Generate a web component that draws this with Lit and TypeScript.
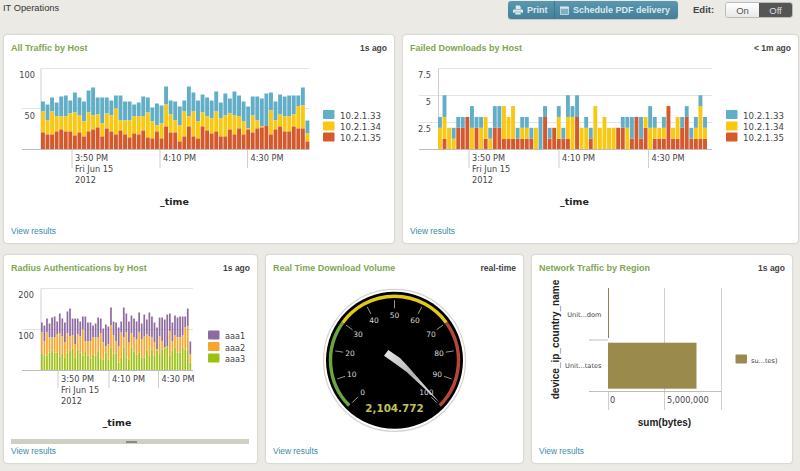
import { LitElement, html, css, svg } from "lit";
import { customElement } from "lit/decorators.js";

const TOTAL = [48,45,52,47,53,54,49,57,52,48,59,62,52,52,52,49,54,54,48,48,45,47,53,52,42,46,44,63,49,48,43,49,63,57,49,55,52,49,58,47,56,51,58,54,48,43,53,53,51,56,57,48,55,53,54,54,54,62,29];
const MID = [38,29,38,33,33,33,36,37,34,28,37,34,35,26,36,34,41,29,29,29,33,33,33,37,28,24,26,45,35,29,24,38,33,38,28,37,33,31,38,31,34,36,34,33,28,21,34,29,23,24,39,29,35,33,33,35,43,44,16];
const LOW = [17,15,15,18,20,18,18,14,17,13,18,20,22,13,21,18,15,19,15,12,16,15,19,12,11,18,11,23,17,17,8,13,23,13,11,23,19,16,18,13,13,20,15,21,15,20,17,21,22,24,15,20,23,18,18,23,21,21,8];
// failed downloads: [red, yellow, blue] counts per bar
const FAILED = [[0,2,1],[1,2,2],[0,2,0],[0,1,1],[2,0,1],[2,0,1],[3,0,0],[0,2,2],[2,0,1],[0,2,1],[1,2,0],[0,1,1],[2,0,2],[2,0,2],[1,3,0],[1,2,0],[1,3,0],[1,0,1],[1,1,1],[1,1,1],[1,0,1],[0,2,0],[0,0,3],[3,0,1],[1,0,1],[2,0,0],[1,2,1],[1,0,1],[1,2,2],[0,3,1],[3,0,2],[0,2,0],[0,2,1],[1,0,1],[0,4,0],[0,2,0],[0,3,0],[0,2,0],[0,2,0],[2,0,0],[2,0,1],[0,2,1],[1,0,2],[3,0,0],[1,0,2],[2,1,0],[0,2,2],[1,1,1],[1,1,0],[1,1,1],[4,0,0],[1,1,0],[1,2,0],[2,0,1],[3,0,1],[1,0,1],[1,1,1],[1,3,1],[1,1,1]].slice(0, 59);

const polar = (cx: number, cy: number, r: number, deg: number): [number, number] => {
  const a = ((deg - 90) * Math.PI) / 180;
  return [cx + r * Math.cos(a), cy + r * Math.sin(a)];
};
const arc = (cx: number, cy: number, r: number, a: number, b: number) => {
  const [x1, y1] = polar(cx, cy, r, a);
  const [x2, y2] = polar(cx, cy, r, b);
  return `M${x1} ${y1}A${r} ${r} 0 ${b - a > 180 ? 1 : 0} 1 ${x2} ${y2}`;
};

interface Axis {
  left: number; right: number; axisStart: number; base: number; top: number;
  grids: number[]; ylabels: [string, number][]; yRight: number;
  ticks: [number, string][]; tickEnd: number;
  timeX: number; timeY: number;
}
const axes = (a: Axis) => svg`
  ${a.grids.map((y) => svg`<line class="grid" x1=${a.axisStart} x2=${a.right} y1=${y} y2=${y}></line>`)}
  <line class="grid" x1=${a.left} x2=${a.right} y1=${a.top} y2=${a.top}></line>
  <line class="axis" x1=${a.left} x2=${a.left} y1=${a.top} y2=${a.base}></line>
  ${a.ylabels.map(([t, y]) => svg`<text class="lbl" x=${a.yRight} y=${y} text-anchor="end">${t}</text>`)}
  ${a.ticks.map(([x, t], i) => svg`
    <line class="axis" x1=${x} x2=${x} y1=${a.base} y2=${a.tickEnd}></line>
    <text class="lbl" x=${x + 3} y=${a.base + 11}>${t}</text>
    ${i === 0 ? svg`<text class="lbl" x=${x + 3} y=${a.base + 22}>Fri Jun 15</text><text class="lbl" x=${x + 3} y=${a.base + 33}>2012</text>` : ""}
  `)}
  <text class="axt" x=${a.timeX} y=${a.timeY} text-anchor="middle">_time</text>
`;
const legend = (x: number, y: number[], items: [string, string][], cls = "leg") => items.map(([t, c], i) => svg`
  <rect x=${x} y=${y[i]} width="11.5" height="9" rx="1" fill=${c}></rect>
  <text class=${cls} x=${x + 17} y=${y[i] + 8.6}>${t}</text>
`);
const baseLine = (x1: number, x2: number, y: number) => svg`<line class="base" x1=${x1} x2=${x2} y1=${y} y2=${y}></line>`;

const BLUE = "#62aec7", YEL = "#f8c813", RED = "#d5592d";
const HOSTS: [string, string][] = [["10.2.1.33", BLUE], ["10.2.1.34", YEL], ["10.2.1.35", RED]];

const stack = (x0: number, pitch: number, w: number, base: number, c: [string, string, string]) =>
  TOTAL.map((t, i) => {
    const x = x0 + i * pitch;
    return svg`
      <rect x=${x} y=${base - t} width=${w} height=${t - MID[i]} fill=${c[0]}></rect>
      <rect x=${x} y=${base - MID[i]} width=${w} height=${MID[i] - LOW[i]} fill=${c[1]}></rect>
      <rect x=${x} y=${base - LOW[i]} width=${w} height=${LOW[i]} fill=${c[2]}></rect>`;
  });

const failedBars = (x0: number, pitch: number, w: number, base: number, unit: number) =>
  FAILED.map(([r, y, b], i) => {
    const x = x0 + i * pitch;
    return svg`
      <rect x=${x} y=${base - r * unit} width=${w} height=${r * unit} fill=${RED}></rect>
      <rect x=${x} y=${base - (r + y) * unit} width=${w} height=${y * unit} fill=${YEL}></rect>
      <rect x=${x} y=${base - (r + y + b) * unit} width=${w} height=${b * unit} fill=${BLUE}></rect>`;
  });

@customElement("app-root")
export class AppRoot extends LitElement {
  static styles = css`
    :host { display: block; width: 800px; height: 471px; overflow: hidden; background: #ebeae5; font-family: "Liberation Sans", Arial, sans-serif; }
    .top { display: flex; align-items: flex-start; height: 35px; box-sizing: border-box; padding: 1px 7px 0 3px; color: #333; }
    .crumb { font-size: 9.3px; line-height: 15px; flex: 1; color: #333; }
    .btns { display: flex; height: 18px; border-radius: 3px; background: linear-gradient(#5c97b0, #447f99); color: #dbe9ee; font-size: 9px; font-weight: bold; align-items: center; box-shadow: 0 1px 1px rgba(0,0,0,.15); }
    .btn { display: flex; align-items: center; gap: 3.5px; height: 100%; padding: 0 6.5px 0 5px; }
    .btn + .btn { border-left: 1px solid #3f7790; padding: 0 8px 0 5px; gap: 4px; }
    .edit { font-size: 9.5px; font-weight: bold; width: 20px; margin: 3px 12px 0 15px; color: #444; white-space: nowrap; }
    .toggle { display: flex; height: 16px; margin-top: 1px; border-radius: 3px; overflow: hidden; border: 1px solid #bbb; font-size: 9.5px; box-sizing: border-box; width: 68px; }
    .toggle div { flex: 1; display: flex; align-items: center; justify-content: center; }
    .on { background: linear-gradient(#fff, #e8e8e8); color: #555; }
    .off { background: #555; color: #ddd; }
    .row { display: grid; column-gap: 9px; padding-left: 4px; }
    .r1 { grid-template-columns: 390px 395px; margin-bottom: 12px; }
    .r2 { grid-template-columns: 253px 257px 260px; }
    .panel { height: 208px; box-sizing: border-box; background: #fff; border-radius: 3px; box-shadow: 0 0 2px rgba(0,0,0,.28); display: flex; flex-direction: column; position: relative; }
    .head { display: flex; justify-content: space-between; align-items: baseline; height: 25px; box-sizing: border-box; padding: 7.5px 7px 0 7px; font-size: 9px; font-weight: bold; line-height: 11px; }
    .title { color: #7ea651; }
    .age { color: #444; font-size: 8.5px; }
    svg.chart { display: block; flex: 1; min-height: 0; }
    .foot { height: 21px; box-sizing: border-box; padding: 4px 0 0 7px; font-size: 8.4px; line-height: 11px; color: #3c8aa6; }
    .grid { stroke: #e4e4e4; stroke-width: 1; }
    .axis { stroke: #cfcfcf; stroke-width: 1; }
    .base { stroke: #bdbdbd; stroke-width: 1; }
    .lbl { font-family: "DejaVu Sans", sans-serif; font-size: 8.2px; fill: #444; }
    .leg { font-family: "DejaVu Sans", sans-serif; font-size: 8.6px; fill: #444; }
    .axt { font-family: "DejaVu Sans", sans-serif; font-size: 9.5px; font-weight: bold; fill: #222; }
    .sm { font-family: "DejaVu Sans", sans-serif; font-size: 6.6px; fill: #444; }
    .ax5 { font-family: "Liberation Sans", sans-serif; font-size: 10px; font-weight: bold; fill: #222; }
    .g { font-family: "DejaVu Sans", sans-serif; font-size: 7.5px; fill: #d8d8d8; }
    .gv { font-family: "DejaVu Sans", sans-serif; font-size: 10.4px; font-weight: bold; fill: #bfc05c; }
    .tick { stroke: #bbb; stroke-width: .8; }
    .scroll { position: absolute; left: 7px; right: 8px; top: 184px; height: 5px; background: #cfcfc4; display: flex; justify-content: center; }
    .thumb { width: 11px; height: 2px; margin: 1.5px 0 0 2px; background: #8a8a84; }
  `;

  private gauge() {
    const cx = 394.5, cy = 360.3;
    const deg = (v: number) => -135 + 2.7 * v;
    const nums = Array.from({ length: 11 }, (_, i) => i * 10);
    return svg`
      <defs>
        <linearGradient id="nd" x1="0" y1="0" x2="1" y2="1">
          <stop offset="0" stop-color="#e8e8e8"></stop>
          <stop offset=".5" stop-color="#b4b4b4"></stop>
          <stop offset="1" stop-color="#f4f4f4"></stop>
        </linearGradient>
      </defs>
      <circle cx=${cx} cy=${cy} r="71" fill="#fff" stroke="#d4d4cf" stroke-width="1.2"></circle>
      <circle cx=${cx} cy=${cy} r="68.5" fill="#000"></circle>
      <path d=${arc(cx, cy, 64, deg(0), deg(30))} fill="none" stroke="#6da63c" stroke-width="3.4"></path>
      <path d=${arc(cx, cy, 64, deg(30), deg(70))} fill="none" stroke="#e0cb18" stroke-width="3.4"></path>
      <path d=${arc(cx, cy, 64, deg(70), deg(100))} fill="none" stroke="#b4493a" stroke-width="3.4"></path>
      ${nums.map((v) => {
        const [x1, y1] = polar(cx, cy, 60, deg(v));
        const [x2, y2] = polar(cx, cy, 52, deg(v));
        const [tx, ty] = polar(cx, cy, 45, deg(v));
        return svg`<line class="tick" x1=${x1} y1=${y1} x2=${x2} y2=${y2}></line>
          <text class="g" x=${tx} y=${ty + 2.7} text-anchor="middle">${v}</text>`;
      })}
      <text class="gv" x=${cx} y="411.5" text-anchor="middle">2,104.772</text>
      <polygon points="388.3,350 400,358 406.7,365 439.3,402.3 406.7,372 395,363.5 384,355.7" fill="url(#nd)"></polygon>
    `;
  }

  render() {
    return html`
      <div class="top">
        <div class="crumb">IT Operations</div>
        <div class="btns">
          <div class="btn">
            <svg width="10" height="10" viewBox="0 0 11 10"><path d="M3 0h4l1.5 1.5V4H3zM1 4.5h9a1 1 0 0 1 1 1V8H9V7H2v1H0V5.5a1 1 0 0 1 1-1zM2.5 7.5h6V10h-6z" fill="#dcebf0"></path></svg>
            Print
          </div>
          <div class="btn">
            <svg width="9" height="9" viewBox="0 0 10 10"><rect x=".5" y="1" width="9" height="8.5" fill="#7fb0c4" stroke="#dcebf0" stroke-width=".8"></rect><rect x=".5" y="1" width="9" height="2" fill="#dcebf0"></rect></svg>
            Schedule PDF delivery
          </div>
        </div>
        <div class="edit">Edit:</div>
        <div class="toggle"><div class="on">On</div><div class="off">Off</div></div>
      </div>

      <div class="row r1">
        <div class="panel">
          <div class="head"><span class="title">All Traffic by Host</span><span class="age">1s ago</span></div>
          <svg class="chart" viewBox="4 60 390 162">
            ${axes({ left: 41, right: 309, axisStart: 22, base: 149.5, top: 68.5, grids: [108.5], ylabels: [["100", 78], ["50", 119]], yRight: 35, ticks: [[72, "3:50 PM"], [160, "4:10 PM"], [247.5, "4:30 PM"]], tickEnd: 168, timeX: 174.5, timeY: 205 })}
            ${stack(41, 4.56, 3.9, 149.5, [BLUE, YEL, RED])}
            ${baseLine(22, 309, 149.5)}
            ${legend(323, [110, 121.5, 132.5], HOSTS)}
          </svg>
          <div class="foot">View results</div>
        </div>
        <div class="panel">
          <div class="head"><span class="title">Failed Downloads by Host</span><span class="age">&lt; 1m ago</span></div>
          <svg class="chart" viewBox="403 60 395 162">
            ${axes({ left: 438.5, right: 712, axisStart: 419, base: 149.5, top: 68.5, grids: [95.5, 122.5], ylabels: [["7.5", 78], ["5", 105], ["2.5", 132]], yRight: 431, ticks: [[469, "3:50 PM"], [559, "4:10 PM"], [648.5, "4:30 PM"]], tickEnd: 168, timeX: 574.5, timeY: 205 })}
            ${failedBars(438, 4.57, 3.9, 149.5, 10.85)}
            ${baseLine(419, 712, 149.5)}
            ${legend(726, [110, 121.5, 132.5], HOSTS)}
          </svg>
          <div class="foot">View results</div>
        </div>
      </div>

      <div class="row r2">
        <div class="panel">
          <div class="head"><span class="title">Radius Authentications by Host</span><span class="age">1s ago</span></div>
          <svg class="chart" viewBox="4 280 253 162">
            ${axes({ left: 41, right: 193, axisStart: 22, base: 370.5, top: 288.5, grids: [329.5], ylabels: [["200", 298], ["100", 339]], yRight: 34, ticks: [[58, "3:50 PM"], [109, "4:10 PM"], [158.5, "4:30 PM"]], tickEnd: 388, timeX: 117, timeY: 426 })}
            ${stack(41, 2.56, 1.7, 370.5, ["#8d6a9f", "#f6a62c", "#9dc014"])}
            ${baseLine(22, 193, 370.5)}
            ${legend(208, [330.5, 342, 353.5], [["aaa1", "#8d6a9f"], ["aaa2", "#f6a62c"], ["aaa3", "#9dc014"]], "lbl")}
          </svg>
          <div class="scroll"><div class="thumb"></div></div>
          <div class="foot">View results</div>
        </div>
        <div class="panel">
          <div class="head"><span class="title">Real Time Download Volume</span><span class="age">real-time</span></div>
          <svg class="chart" viewBox="266 280 257 162">${this.gauge()}</svg>
          <div class="foot">View results</div>
        </div>
        <div class="panel">
          <div class="head"><span class="title">Network Traffic by Region</span><span class="age">1s ago</span></div>
          <svg class="chart" viewBox="532 280 260 162">
            <line class="axis" x1="664.5" x2="664.5" y1="288" y2="410"></line>
            <line class="axis" x1="721.5" x2="721.5" y1="288" y2="410"></line>
            <line class="axis" x1="608.5" x2="608.5" y1="391" y2="410"></line>
            <line class="base" x1="589" x2="721" y1="391.5" y2="391.5"></line>
            <line class="base" x1="589" x2="608" y1="340" y2="340"></line>
            <line x1="608.5" x2="608.5" y1="288" y2="338" stroke="#8d8054"></line>
            <rect x="608" y="342.7" width="88.5" height="46" fill="#9a8a4c"></rect>
            <text class="sm" x="601.5" y="316.5" text-anchor="end">Unit...dom</text>
            <text class="sm" x="601.5" y="367.5" text-anchor="end">Unit...tates</text>
            <text class="lbl" x="610" y="402.5">0</text>
            <text class="lbl" x="667" y="402.5">5,000,000</text>
            <text class="ax5" x="664.5" y="426" text-anchor="middle">sum(bytes)</text>
            <text class="ax5" transform="translate(559 339.5) rotate(-90)" text-anchor="middle">device_ip_country_name</text>
            <rect x="735.5" y="354.5" width="11.5" height="9" rx="1" fill="#9a8a4c"></rect>
            <text class="sm" x="751" y="363">su...tes)</text>
          </svg>
          <div class="foot">View results</div>
        </div>
      </div>
    `;
  }
}
